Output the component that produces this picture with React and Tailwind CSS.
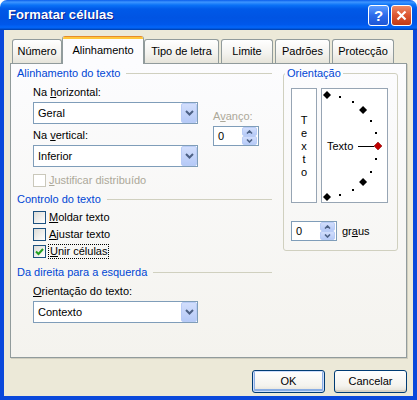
import React from 'react';

const FONT = "font-['Liberation_Sans',Arial,sans-serif]";

function Chevron() {
  return (
    <svg width="9" height="6" viewBox="0 0 9 6">
      <path d="M1 1 L4.5 4.5 L8 1" fill="none" stroke="#4D6185" strokeWidth="2" />
    </svg>
  );
}

function Combo({ value }) {
  return (
    <div className="flex items-center w-[165px] h-[22px] border border-[#7F9DB9] bg-white">
      <span className="flex-1 pl-[4px] leading-[13px]">{value}</span>
      <div className="flex items-center justify-center w-[16px] h-[20px] rounded-[2px] border border-[#B9CCF6] bg-[linear-gradient(180deg,#D2DEFC,#B6CAF7)]">
        <Chevron />
      </div>
    </div>
  );
}

function Spin({ value }) {
  return (
    <div className="flex items-center w-[46px] h-[20px] border border-[#7F9DB9] bg-white">
      <span className="flex-1 pl-[4px] leading-[13px]">{value}</span>
      <div className="flex flex-col w-[15px] h-[18px] mr-[1px]">
        <div className="flex-1 flex items-center justify-center rounded-[2px] border border-[#B9CCF6] bg-[linear-gradient(180deg,#D2DEFC,#B6CAF7)]">
          <svg width="7" height="4" viewBox="0 0 7 4"><path d="M1 3.5 L3.5 1 L6 3.5" fill="none" stroke="#4D6185" strokeWidth="1.6" /></svg>
        </div>
        <div className="flex-1 flex items-center justify-center rounded-[2px] border border-[#B9CCF6] bg-[linear-gradient(180deg,#D2DEFC,#B6CAF7)]">
          <svg width="7" height="4" viewBox="0 0 7 4"><path d="M1 0.5 L3.5 3 L6 0.5" fill="none" stroke="#4D6185" strokeWidth="1.6" /></svg>
        </div>
      </div>
    </div>
  );
}

function Check({ checked, disabled, focus, children }) {
  return (
    <div className="flex items-center h-[13px]">
      <div
        className={
          disabled
            ? 'w-[13px] h-[13px] border border-[#CAC8BB] bg-white'
            : 'w-[13px] h-[13px] border border-[#1C5180] bg-[linear-gradient(135deg,#DCDCD7,#FFFFFF)] flex items-center justify-center'
        }
      >
        {checked && (
          <svg width="9" height="9" viewBox="0 0 9 9">
            <path d="M1 4.5 L3.5 7 L8 2" fill="none" stroke="#21A121" strokeWidth="2" />
          </svg>
        )}
      </div>
      <span
        className={
          (disabled ? 'text-[#ACA899] ' : '') +
          (focus ? 'ml-[2px] px-[1px] border border-dotted border-black leading-[13px]' : 'ml-[3px] leading-[13px]')
        }
      >
        {children}
      </span>
    </div>
  );
}

function GroupHead({ children, className = '' }) {
  return (
    <div className={'flex items-center h-[13px] ' + className}>
      <span className="text-[#0046D5] leading-[13px] whitespace-nowrap">{children}</span>
      <div className="flex-1 h-px ml-[6px] bg-[#D0D0BF]" />
    </div>
  );
}

function Dial() {
  const cx = 5;
  const cy = 57;
  const r = 51;
  const items = [];
  for (let a = 90; a >= -90; a -= 15) {
    const rad = (a * Math.PI) / 180;
    const x = cx + r * Math.cos(rad);
    const y = cy - r * Math.sin(rad);
    if (a === 0) {
      items.push(<path key={a} d={`M${x} ${y - 4} L${x + 4} ${y} L${x} ${y + 4} L${x - 4} ${y} Z`} fill="#C00000" stroke="#800000" strokeWidth="0.5" />);
    } else if (a % 45 === 0) {
      items.push(<path key={a} d={`M${x} ${y - 4} L${x + 4} ${y} L${x} ${y + 4} L${x - 4} ${y} Z`} fill="#000" />);
    } else {
      items.push(<rect key={a} x={Math.round(x) - 1} y={Math.round(y) - 1} width="2" height="2" fill="#000" />);
    }
  }
  return (
    <svg width="65" height="113" viewBox="0 0 65 113" className="block">
      <text x="5" y="61" fontSize="11" fontFamily="Liberation Sans, Arial, sans-serif" fill="#000">Texto</text>
      <line x1="36" y1="57.5" x2="52" y2="57.5" stroke="#000" strokeWidth="1" />
      {items}
    </svg>
  );
}

function Tab({ label, w, active }) {
  if (active) {
    return (
      <div
        className={`relative z-10 mb-[-1px] h-[28px] ${w} flex flex-col border-x border-[#919B9C] rounded-t-[3px] bg-[#FCFCFE] overflow-hidden`}
      >
        <div className="h-[1px] bg-[#E68B2C]" />
        <div className="h-[2px] bg-[#FFC73C]" />
        <div className="flex-1 flex items-center justify-center pb-[2px]">{label}</div>
      </div>
    );
  }
  return (
    <div
      className={`h-[24px] ${w} flex items-center justify-center border-x border-t border-[#919B9C] rounded-t-[3px] bg-[linear-gradient(180deg,#FFFFFF,#F3F2EE_60%,#E6E4DA)]`}
    >
      {label}
    </div>
  );
}

function XpButton({ children, primary }) {
  return (
    <div
      className={
        'w-[73px] h-[23px] flex items-center justify-center rounded-[3px] border border-[#003C74] bg-[linear-gradient(180deg,#FFFFFF,#F4F3EE_70%,#E3E0D5)] ' +
        (primary ? 'shadow-[inset_0_0_0_1px_#CEDDFC,inset_0_-1px_0_2px_#89ADE4]' : 'shadow-[inset_0_-2px_0_0_#D8D2C6]')
      }
    >
      {children}
    </div>
  );
}

export default function App() {
  return (
    <div className={`w-[417px] h-[400px] flex flex-col bg-white text-[11px] text-black ${FONT}`}>
      {/* title bar */}
      <div className="h-[30px] shrink-0 flex items-center justify-between pl-[8px] pr-[5px] rounded-t-[7px] bg-[linear-gradient(180deg,#0A5DEB_0%,#3D95FF_7%,#0A72F7_17%,#0059E8_30%,#0054E3_60%,#0058EB_82%,#0366FA_91%,#0050D0_97%,#003AA0_100%)]">
        <span className="text-white font-bold text-[13px] [text-shadow:1px_1px_0_#0B1F8F] tracking-[0.1px]">Formatar células</span>
        <div className="flex gap-[2px]">
          <div className="w-[21px] h-[21px] rounded-[3px] border border-white flex items-center justify-center bg-[linear-gradient(180deg,#5C9CFF,#2C6BEB_50%,#1E56D6)]">
            <span className="text-white font-bold text-[15px] leading-none">?</span>
          </div>
          <div className="w-[21px] h-[21px] rounded-[3px] border border-white flex items-center justify-center bg-[linear-gradient(180deg,#EE8A66,#DC5530_50%,#C23A16)]">
            <svg width="11" height="11" viewBox="0 0 11 11">
              <path d="M1.5 1.5 L9.5 9.5 M9.5 1.5 L1.5 9.5" stroke="#fff" strokeWidth="2.2" />
            </svg>
          </div>
        </div>
      </div>

      {/* body */}
      <div className="flex-1 flex flex-col bg-[#ECE9D8] border-x-4 border-b-4 border-[#0A48DB] pt-[6px]">
        {/* tabs */}
        <div className="flex items-end h-[27px] pl-[8px]">
          <Tab label="Número" w="w-[50px]" />
          <Tab label="Alinhamento" w="w-[82px]" active />
          <Tab label="Tipo de letra" w="w-[75px]" />
          <div className="w-[2px]" />
          <Tab label="Limite" w="w-[52px]" />
          <div className="w-[2px]" />
          <Tab label="Padrões" w="w-[55px]" />
          <div className="w-[2px]" />
          <Tab label="Protecção" w="w-[62px]" />
        </div>

        {/* panel */}
        <div className="mx-[6px] h-[295px] border border-[#919B9C] bg-[linear-gradient(180deg,#FCFCFE,#F4F3EE)] flex items-start pt-[3px] pl-[6px] shadow-[1px_1px_0_#D0CEBF]">
          {/* left column */}
          <div className="w-[255px] flex flex-col">
            <GroupHead>Alinhamento do texto</GroupHead>
            <div className="flex pl-[16px]">
              <div className="flex flex-col">
                <span className="mt-[6px] leading-[13px]">Na <u>h</u>orizontal:</span>
                <div className="mt-[3px]"><Combo value="Geral" /></div>
                <span className="mt-[5px] leading-[13px]">Na <u>v</u>ertical:</span>
                <div className="mt-[3px]"><Combo value="Inferior" /></div>
              </div>
              <div className="flex flex-col ml-[15px] pt-[30px]">
                <span className="leading-[13px] text-[#ACA899]">A<u>v</u>anço:</span>
                <div className="mt-[3px]"><Spin value="0" /></div>
              </div>
            </div>
            <div className="pl-[16px] mt-[7px]">
              <Check disabled><u>J</u>ustificar distribuído</Check>
            </div>
            <GroupHead className="mt-[6px]">Controlo do texto</GroupHead>
            <div className="flex flex-col pl-[16px] pt-[5px] gap-[4px]">
              <Check><u>M</u>oldar texto</Check>
              <Check><u>A</u>justar texto</Check>
              <Check checked focus><u>U</u>nir células</Check>
            </div>
            <GroupHead className="mt-[8px]">Da direita para a esquerda</GroupHead>
            <div className="flex flex-col pl-[16px]">
              <span className="mt-[6px] leading-[13px]"><u>O</u>rientação do texto:</span>
              <div className="mt-[3px]"><Combo value="Contexto" /></div>
            </div>
          </div>

          {/* orientation group */}
          <fieldset className="ml-[11px] w-[115px] border border-[#D0D0BF] rounded-[3px] pb-[9px]">
            <legend className="ml-[1px] px-[2px] leading-[13px] text-[#0046D5]">Orientação</legend>
            <div className="flex pl-[7px] mt-[8px] gap-[4px]">
              <div className="w-[26px] h-[115px] border border-[#97A5B4] bg-white flex flex-col items-center pt-[25px] leading-[13px]">
                <span>T</span>
                <span>e</span>
                <span>x</span>
                <span>t</span>
                <span>o</span>
              </div>
              <div className="w-[67px] h-[115px] border border-[#97A5B4] bg-white">
                <Dial />
              </div>
            </div>
            <div className="flex items-center pl-[7px] mt-[18px]">
              <Spin value="0" />
              <span className="ml-[5px] leading-[13px]">gr<u>a</u>us</span>
            </div>
          </fieldset>
        </div>

        {/* buttons */}
        <div className="flex justify-end gap-[9px] pr-[6px] mt-[12px]">
          <XpButton primary>OK</XpButton>
          <XpButton>Cancelar</XpButton>
        </div>
      </div>
    </div>
  );
}
